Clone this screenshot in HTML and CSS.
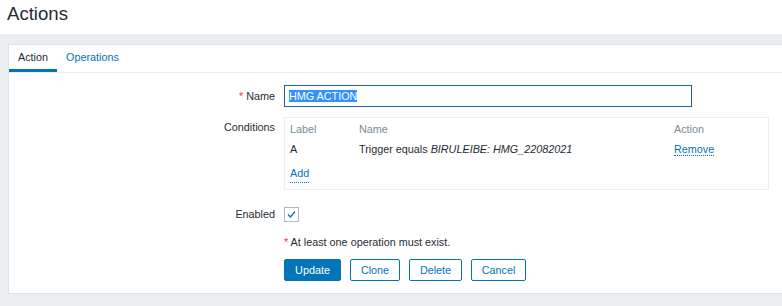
FILE: index.html
```html
<!DOCTYPE html>
<html>
<head>
<meta charset="utf-8">
<link rel="stylesheet" href="styles.css">
</head>
<body>
<header class="page-header"><h1 class="title">Actions</h1></header>
<main class="wrap">
  <section class="panel">
    <nav class="tabs">
      <span class="tab active">Action</span>
      <span class="tab link">Operations</span>
    </nav>
    <div class="form">
      <div class="label row-name"><span class="req">*</span> Name</div>
      <div class="field row-name"><div class="input"><span class="sel">HMG ACTION</span></div></div>

      <div class="label row-cond">Conditions</div>
      <div class="field row-cond">
        <div class="cond-box">
          <div class="trow thead"><span class="c1">Label</span><span class="c2">Name</span><span class="c3">Action</span></div>
          <div class="trow"><span class="c1">A</span><span class="c2">Trigger equals <i>BIRULEIBE: HMG_22082021</i></span><span class="c3"><span class="dlink">Remove</span></span></div>
          <div class="trow add"><span class="dlink">Add</span></div>
        </div>
      </div>

      <div class="label row-en">Enabled</div>
      <div class="field row-en">
        <span class="checkbox"><svg width="13" height="13" viewBox="0 0 13 13"><polyline points="3,6.5 5.5,9 10,3.5" fill="none" stroke="#0275b8" stroke-width="1.3"/></svg></span>
      </div>

      <div class="label"></div>
      <div class="field row-err"><span class="req">*</span> At least one operation must exist.</div>

      <div class="label"></div>
      <div class="field buttons">
        <button class="btn primary">Update</button>
        <button class="btn alt">Clone</button>
        <button class="btn alt">Delete</button>
        <button class="btn alt">Cancel</button>
      </div>
    </div>
  </section>
</main>
</body>
</html>
```
FILE: styles.css
```css
html, body {
  margin: 0;
  padding: 0;
}
body {
  background: #ebeef0;
  font-family: "Liberation Sans", Arial, sans-serif;
  font-size: 10.8px;
  color: #1f2c33;
  overflow: hidden;
}
.page-header {
  background: #fff;
  height: 34px;
  padding-left: 7px;
}
.title {
  margin: 0;
  font-size: 18.6px;
  font-weight: normal;
  line-height: 28px;
  color: #1f2c33;
}
.wrap {
  padding: 10px 0 0 8px;
}
.panel {
  background: #fff;
  border: 1px solid #dfe4e7;
  border-right: none;
  margin-right: -4px;
  padding-bottom: 12px;
}
.tabs {
  display: flex;
  border-bottom: 1px solid #ebeef0;
}
.tab {
  padding: 0 9px;
  line-height: 25px;
  height: 24px;
  border-bottom: 3px solid transparent;
}
.tab.active {
  border-bottom-color: #0275b8;
  color: #1f2c33;
}
.tab.link {
  color: #0275b8;
}
.form {
  display: grid;
  grid-template-columns: 266px 1fr;
  column-gap: 9px;
  padding-top: 12px;
}
.label {
  text-align: right;
}
.req {
  color: #e33734;
}
.label.row-name {
  line-height: 22px;
}
.input {
  width: 398px;
  height: 20px;
  border: 1px solid #1c65a3;
  padding: 0 4px;
  line-height: 21px;
  box-sizing: content-box;
}
.sel {
  background: #3390ff;
  color: #fff;
}
.row-cond {
  margin-top: 10px;
}
.label.row-cond {
  line-height: 14px;
  padding-top: 3px;
}
.cond-box {
  width: 473px;
  border: 1px solid #ebeef0;
  padding: 1px 5px 6px 5px;
}
.trow {
  display: flex;
  height: 20px;
  line-height: 20px;
}
.thead {
  color: #768d99;
}
.c1 { width: 69px; }
.c2 { width: 315px; }
.c3 { flex: 1; }
.trow.add {
  margin-top: 4px;
}
.dlink {
  color: #0275b8;
  border-bottom: 1px dotted #0275b8;
}
.row-en {
  margin-top: 17px;
}
.label.row-en {
  line-height: 15px;
}
.checkbox {
  display: block;
  width: 13px;
  height: 13px;
  border: 1px solid #acbbc2;
  background: #fff;
}
.checkbox svg { display: block; }
.row-err {
  margin-top: 13px;
  line-height: 14px;
}
.buttons {
  display: flex;
  gap: 9px;
  margin-top: 10px;
}
.btn {
  font-family: "Liberation Sans", Arial, sans-serif;
  font-size: 10.8px;
  height: 22px;
  padding: 0 4px;
  border-radius: 2px;
  border: 1px solid #0275b8;
  cursor: pointer;
  line-height: 20px;
}
.btn.primary {
  background: #0275b8;
  color: #fff;
  width: 57px;
}
.btn.alt {
  background: #fff;
  color: #0275b8;
}
.btn.alt:nth-child(2) { width: 50px; }
.btn.alt:nth-child(3) { width: 53px; }
.btn.alt:nth-child(4) { width: 55px; }
```
